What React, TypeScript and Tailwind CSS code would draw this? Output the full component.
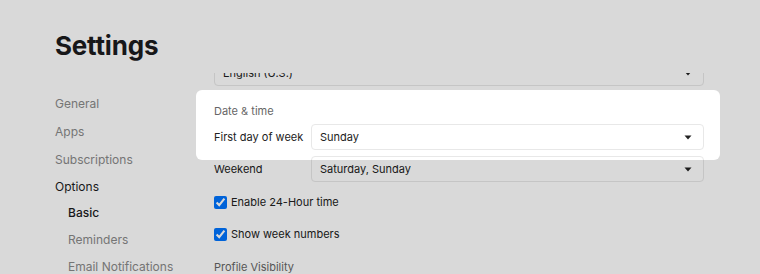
import React from 'react';

/**
 * Settings page with an onboarding spotlight over the "Date & time" group.
 * The page renders normally; the spotlight is a rounded box whose huge
 * box-shadow dims everything outside it.
 */

type NavItem = { label: string; cls: string };

const NAV: NavItem[] = [
  { label: 'General', cls: 'text-[#8a8a8a]' },
  { label: 'Apps', cls: 'mt-[8px] text-[#8a8a8a]' },
  { label: 'Subscriptions', cls: 'mt-[8px] text-[#8a8a8a]' },
  { label: 'Options', cls: 'mt-[7px] text-[#1c1c1e]' },
  { label: 'Basic', cls: 'mt-[6px] pl-[13px] text-[#1c1c1e] font-medium' },
  { label: 'Reminders', cls: 'mt-[7px] pl-[13px] text-[#8a8a8a]' },
  { label: 'Email Notifications', cls: 'mt-[7px] pl-[13px] text-[#8a8a8a]' },
];

function Caret() {
  return (
    <svg width="8" height="5" viewBox="0 0 8 5" className="shrink-0">
      <path d="M0.5 0.5h7L4 4.5z" fill="#222" />
    </svg>
  );
}

function Select({ value, className = '' }: { value: string; className?: string }) {
  return (
    <div
      className={`flex h-[26px] items-center justify-between rounded-[4px] border border-[#e8e8e8] bg-white pl-2 pr-[11px] text-[11px] text-[#222] ${className}`}
    >
      <span className="truncate">{value}</span>
      <Caret />
    </div>
  );
}

function Check({ label, className = '' }: { label: string; className?: string }) {
  return (
    <label className={`flex h-[20px] items-center gap-[4px] text-[11px] text-[#222] ${className}`}>
      <input type="checkbox" defaultChecked className="m-0 h-[13px] w-[13px]" />
      <span>{label}</span>
    </label>
  );
}

export default function App() {
  return (
    <div className="relative h-[274px] w-full overflow-hidden bg-white font-['Inter',sans-serif] antialiased">
      <div className="pl-[55px]">
        <h1 className="mt-[30px] text-[26px] font-bold leading-8 tracking-[-0.2px] text-[#1c1c1e]">Settings</h1>

        <div className="flex">
          <nav className="mt-[32px] flex w-[141px] shrink-0 flex-col text-[12px] leading-5">
            {NAV.map((n) => (
              <div key={n.label} className={n.cls}>
                {n.label}
              </div>
            ))}
          </nav>

          <div className="mt-[11px] h-[220px] w-[524px] shrink-0 overflow-hidden pl-[18px] pr-[16px]">
            <Select value="English (U.S.)" className="-mt-[13px]" />

            <div className="mt-[17px] text-[11px] leading-4 text-[#666]">Date &amp; time</div>
            <div className="mt-[5px] grid grid-cols-[97px_1fr] items-center">
              <span className="whitespace-nowrap text-[11px] text-[#222]">First day of week</span>
              <Select value="Sunday" />
            </div>
            <div className="mt-[6px] grid grid-cols-[97px_1fr] items-center">
              <span className="text-[11px] text-[#222]">Weekend</span>
              <Select value="Saturday, Sunday" />
            </div>

            <Check label="Enable 24-Hour time" className="mt-[10px]" />
            <Check label="Show week numbers" className="mt-[12px]" />

            <div className="mt-[15px] text-[11px] leading-4 text-[#666]">Profile Visibility</div>
          </div>
        </div>
      </div>

      {/* spotlight: cut-out in the dimming layer */}
      <div className="pointer-events-none absolute left-[196px] top-[90px] h-[70px] w-[524px] rounded-[6px] shadow-[0_0_0_2000px_rgba(0,0,0,0.15)]" />
    </div>
  );
}
